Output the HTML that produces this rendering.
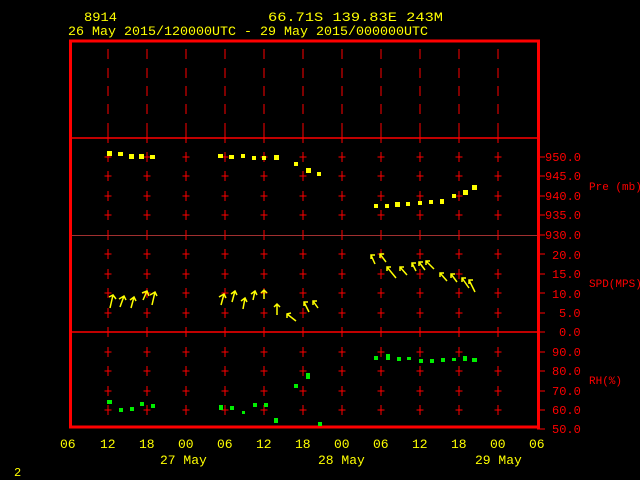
<!DOCTYPE html>
<html><head><style>
html,body{margin:0;padding:0;background:#000;}
svg{display:block;}
text{font-family:"Liberation Mono",monospace;}
</style></head><body>
<svg width="640" height="480" viewBox="0 0 640 480" xmlns="http://www.w3.org/2000/svg">
<rect width="640" height="480" fill="#000"/>
<g fill="#ffff00" font-size="13">
<text x="84" y="21" textLength="33" lengthAdjust="spacingAndGlyphs">8914</text>
<text x="268" y="21" textLength="175" lengthAdjust="spacingAndGlyphs">66.71S  139.83E   243M</text>
<text x="68" y="35" textLength="360" lengthAdjust="spacingAndGlyphs">26 May 2015/120000UTC - 29 May 2015/000000UTC</text>
<text x="60" y="448">06</text><text x="100" y="448">12</text><text x="139" y="448">18</text><text x="178" y="448">00</text><text x="217" y="448">06</text><text x="256" y="448">12</text><text x="295" y="448">18</text><text x="334" y="448">00</text><text x="373" y="448">06</text><text x="412" y="448">12</text><text x="451" y="448">18</text><text x="490" y="448">00</text><text x="529" y="448">06</text>
<text x="160" y="464">27 May</text><text x="318" y="464">28 May</text><text x="475" y="464">29 May</text>
<text x="14" y="476" font-size="12">2</text>
</g>
<g stroke="#ff0000" fill="none">
<rect x="70.5" y="41" width="468" height="386" stroke-width="3"/>
<line x1="72" y1="138" x2="537" y2="138" stroke-width="1.5"/>
<line x1="72" y1="235.5" x2="537" y2="235.5" stroke="#a03030" stroke-width="1"/>
<line x1="72" y1="332" x2="537" y2="332" stroke-width="1.5"/>
</g>
<g stroke="#ff0000" stroke-width="1">
<path d="M108 49v10M108 68v10M108 86v10M108 104v10M108 123v10
M147 49v10M147 68v10M147 86v10M147 104v10M147 123v10
M186 49v10M186 68v10M186 86v10M186 104v10M186 123v10
M225 49v10M225 68v10M225 86v10M225 104v10M225 123v10
M264 49v10M264 68v10M264 86v10M264 104v10M264 123v10
M303 49v10M303 68v10M303 86v10M303 104v10M303 123v10
M342 49v10M342 68v10M342 86v10M342 104v10M342 123v10
M381 49v10M381 68v10M381 86v10M381 104v10M381 123v10
M420 49v10M420 68v10M420 86v10M420 104v10M420 123v10
M459 49v10M459 68v10M459 86v10M459 104v10M459 123v10
M498 49v10M498 68v10M498 86v10M498 104v10M498 123v10"/>
</g>
<g id="crosses" stroke="#ff0000" stroke-width="1"></g>
<g fill="#ff0000" font-size="12">
<text x="545" y="161">950.0</text><text x="545" y="180">945.0</text><text x="545" y="200">940.0</text><text x="545" y="219">935.0</text><text x="545" y="239">930.0</text>
<text x="552" y="259">20.0</text><text x="552" y="278">15.0</text><text x="552" y="298">10.0</text><text x="559" y="317">5.0</text><text x="559" y="336">0.0</text>
<text x="552" y="356">90.0</text><text x="552" y="375">80.0</text><text x="552" y="395">70.0</text><text x="552" y="414">60.0</text><text x="552" y="433">50.0</text>
<text x="589" y="190" font-size="11">Pre (mb)</text><text x="589" y="287" font-size="11">SPD(MPS)</text><text x="589" y="384" font-size="11">RH(%)</text>
</g>
<g fill="#ffff00">
<rect x="107" y="151" width="5" height="5"/><rect x="118" y="152" width="5" height="4"/><rect x="129" y="154" width="5" height="5"/><rect x="139" y="154" width="5" height="5"/><rect x="150" y="155" width="5" height="4"/>
<rect x="218" y="154" width="5" height="4"/><rect x="229" y="155" width="5" height="4"/><rect x="241" y="154" width="4" height="4"/><rect x="252" y="156" width="4" height="4"/><rect x="262" y="156" width="4" height="4"/><rect x="274" y="155" width="5" height="5"/>
<rect x="294" y="162" width="4" height="4"/><rect x="306" y="168" width="5" height="5"/><rect x="317" y="172" width="4" height="4"/>
<rect x="374" y="204" width="4" height="4"/><rect x="385" y="204" width="4" height="4"/><rect x="395" y="202" width="5" height="5"/><rect x="406" y="202" width="4" height="4"/><rect x="418" y="201" width="4" height="4"/><rect x="429" y="200" width="4" height="4"/><rect x="440" y="199" width="4" height="5"/><rect x="452" y="194" width="4" height="4"/><rect x="463" y="190" width="5" height="5"/><rect x="472" y="185" width="5" height="5"/>
</g>
<g fill="#00ee00">
<rect x="107" y="400" width="5" height="4"/><rect x="119" y="408" width="4" height="4"/><rect x="130" y="407" width="4" height="4"/><rect x="140" y="402" width="4" height="4"/><rect x="151" y="404" width="4" height="4"/>
<rect x="219" y="405" width="4" height="5"/><rect x="230" y="406" width="4" height="4"/><rect x="242" y="411" width="3" height="3"/><rect x="253" y="403" width="4" height="4"/><rect x="264" y="403" width="4" height="4"/><rect x="274" y="418" width="4" height="5"/>
<rect x="294" y="384" width="4" height="4"/><rect x="306" y="373" width="4" height="6"/><rect x="318" y="422" width="4" height="4"/>
<rect x="374" y="356" width="4" height="4"/><rect x="386" y="354" width="4" height="6"/><rect x="397" y="357" width="4" height="4"/><rect x="407" y="357" width="4" height="3"/><rect x="419" y="359" width="4" height="4"/><rect x="430" y="359" width="4" height="4"/><rect x="441" y="358" width="4" height="4"/><rect x="452" y="358" width="4" height="3"/><rect x="463" y="356" width="4" height="5"/><rect x="472" y="358" width="5" height="4"/>
</g>
<g stroke="#ffff00" stroke-width="1.5" fill="none">
<path d="M110 308l3-13m-4 2l4-2 3 4M120 307l4-11m-5 3l5-3 2 4M131 308l3-11m-4 3l4-3 2 4M143 300l4-9m-5 2l5-2 2 5M152 305l3-13m-5 3l5-3 2 4"/>
<path d="M221 305l3-11m-5 3l5-3 2 4M232 302l3-11m-4 3l4-3 2 4M243 309l2-11m-4 3l4-3 2 4M253 300l2-9m-4 3l4-3 2 4M264 299l0-9m-3 3l3-3 3 3"/>
<path d="M277 315l0-11m-3 3l3-3 3 3M296 321l-9-7m0 4l0-4 4-1M309 312l-5-10m0 4l0-4 4 0M318 308l-5-7m0 4l0-4 4 0"/>
<path d="M375 264l-4-9m0 4l0-4 4 0M386 262l-6-8m0 4l0-4 4 0M396 278l-9-11m0 4l0-4 4 0M407 275l-7-8m0 4l0-4 4 0M416 271l-4-8m0 4l0-4 4 0M425 270l-6-8m0 4l0-4 4 0M434 269l-8-8m0 4l0-4 4 0M447 281l-7-8m0 4l0-4 4 0M457 282l-6-8m0 4l0-4 4 0M469 288l-7-10m0 4l0-4 4 0M475 292l-6-12m0 4l0-4 4 0"/>
</g>
<script>
var g=document.getElementById('crosses'),d='';
var xs=[108,147,186,225,264,303,342,381,420,459,498];
var ys=[157,176,196,215,254,274,293,313,352,371,391,410];
xs.forEach(function(x){ys.forEach(function(y){d+='M'+x+' '+(y-5)+'v10M'+(x-3.5)+' '+y+'h7';});
[138,235,332].forEach(function(y){d+='M'+x+' '+(y-5)+'v10';});});
[157,176,196,215,235,254,274,293,313,332,352,371,391,410,429].forEach(function(y){d+='M537 '+y+'h8';});
var p=document.createElementNS('http://www.w3.org/2000/svg','path');p.setAttribute('d',d);g.appendChild(p);
</script>
</svg>
</body></html>
